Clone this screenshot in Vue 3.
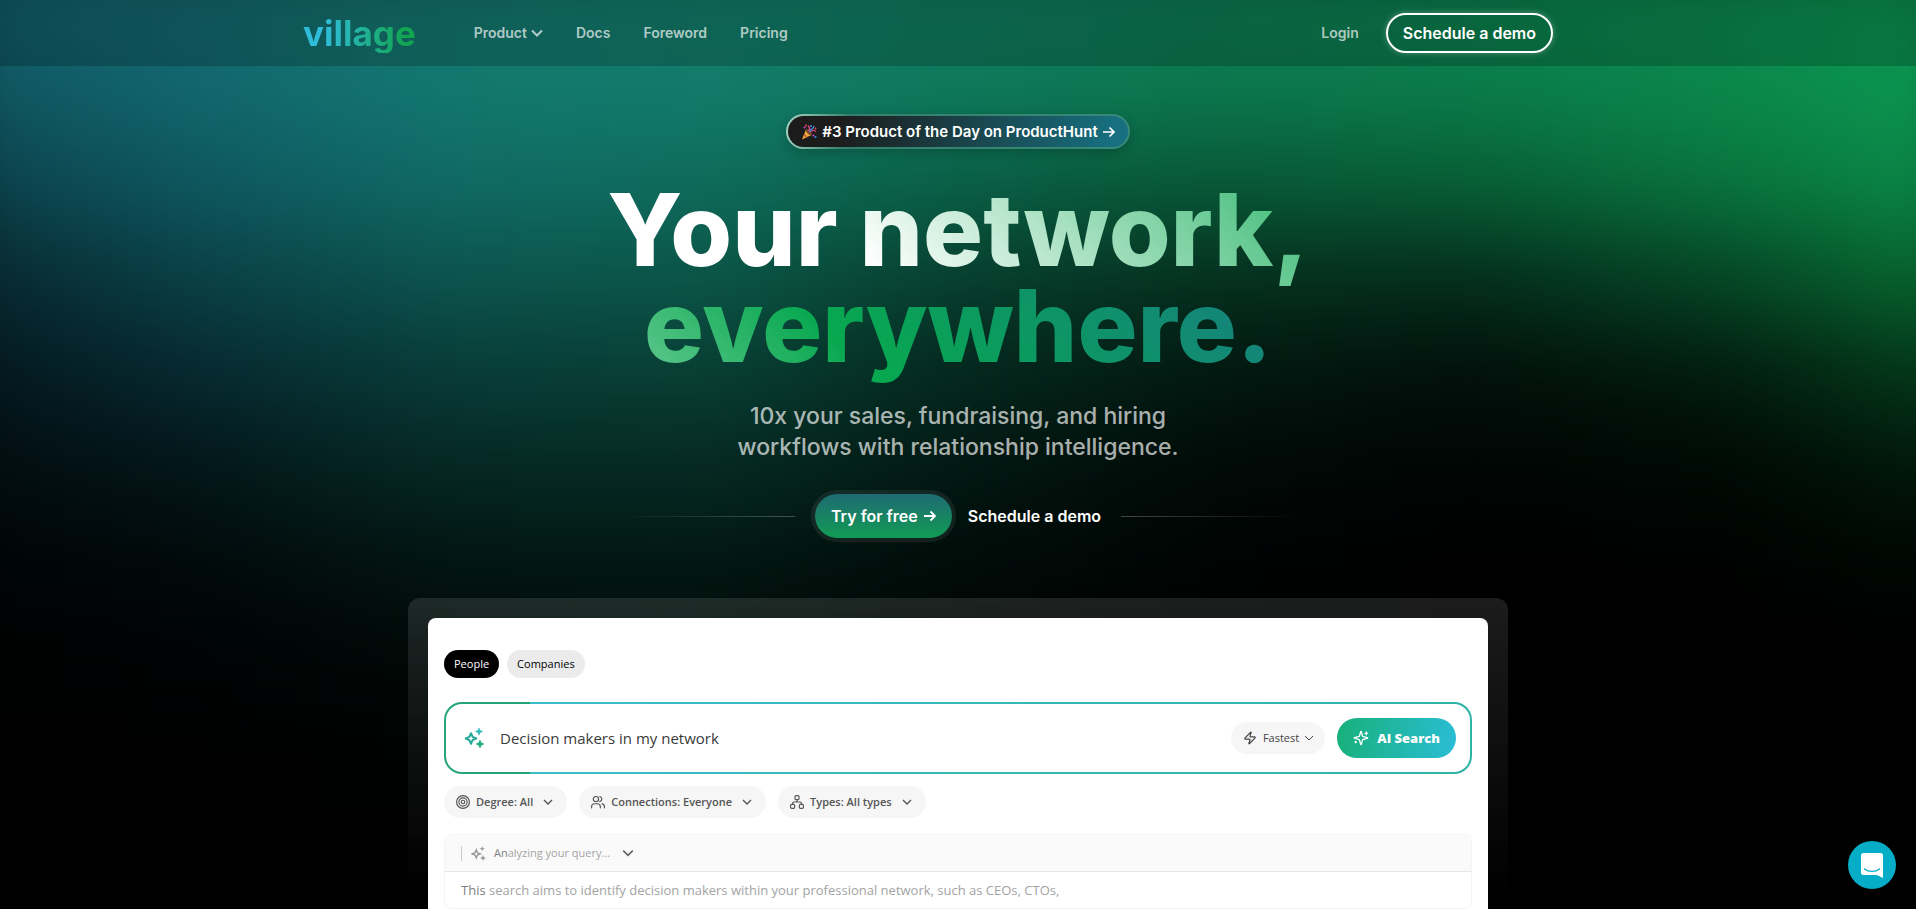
<script setup>
import { ref } from 'vue'

const query = ref('Decision makers in my network')
const tab = ref('People')

const navLinks = ['Docs', 'Foreword', 'Pricing']

// colour rows of the hero glow, top to bottom; every row runs left to right
const glow = [
  ['#11606c', '#146a70', '#147870', '#137e6c', '#107e62', '#0d7e58', '#0c8250', '#0b8b50', '#0b9650'],
  ['#0f5460', '#12666f', '#13786f', '#127c6b', '#0e7a5c', '#0c784e', '#0a7c4b', '#0a884c', '#0b9951'],
  ['#0b3d48', '#0e575f', '#106a66', '#0e6c5b', '#0a6047', '#085938', '#086035', '#09743e', '#0a8c49'],
  ['#07232c', '#0a3f46', '#0c544e', '#0b5648', '#073f2e', '#05301f', '#042d1d', '#054625', '#086d32'],
  ['#03131a', '#06282f', '#083b38', '#083f34', '#04271d', '#021810', '#020f0a', '#021b0e', '#04401d'],
  ['#010a0d', '#031518', '#052723', '#052922', '#021812', '#010906', '#000403', '#000804', '#011b0b'],
  ['#000304', '#010809', '#021411', '#021611', '#010b08', '#000302', '#000000', '#000100', '#000703'],
  ['#000000', '#000203', '#010806', '#010907', '#000302', '#000000', '#000000', '#000000', '#000000'],
  ['#000000', '#000000', '#000201', '#000201', '#000000', '#000000', '#000000', '#000000', '#000000'],
  ['#000000', '#000000', '#000000', '#000000', '#000000', '#000000', '#000000', '#000000', '#000000'],
]
</script>

<template>
  <div class="page">
    <div class="glow" aria-hidden="true">
      <div
        v-for="(row, i) in glow"
        :key="i"
        class="glow_row"
        :style="{ backgroundImage: `linear-gradient(90deg, ${row.join(', ')})` }"
      ></div>
    </div>

    <header class="header">
      <div class="header_inner">
        <a href="#" class="logo">village</a>
        <nav class="nav">
          <button type="button" class="nav_link">
            Product
            <svg width="12" height="12" viewBox="0 0 12 12" fill="none" stroke="currentColor" stroke-width="2"><path d="M1 3.5 6 8.5 11 3.5" /></svg>
          </button>
          <a v-for="link in navLinks" :key="link" href="#" class="nav_link">{{ link }}</a>
        </nav>
        <a href="#" class="nav_link">Login</a>
        <a href="#" class="demo_btn">Schedule a demo</a>
      </div>
    </header>

    <main class="main">
      <a href="#" class="badge">
        <svg width="16" height="16" viewBox="0 0 16 16">
          <path d="M1 15.5 5 5.5 10.5 11z" fill="#f2b233" />
          <path d="M3.5 9.5 7 13 5 13.8 2.6 11.4z" fill="#c8663c" />
          <ellipse cx="7.8" cy="8.2" rx="1.7" ry="3.9" transform="rotate(-45 7.8 8.2)" fill="#7c4a35" />
          <path d="M8 7C9 5 8.5 3 7 1.5M9 8c2-2 4-2 6-.5" stroke="#e0457b" stroke-width="1.3" fill="none" />
          <path d="M8.5 7.5c1-3 4-2 4.5-5.5" stroke="#3f8fe8" stroke-width="1.5" fill="none" />
          <circle cx="3.5" cy="3.5" r="1" fill="#d94ad0" /><circle cx="10" cy="2" r="1" fill="#3f8fe8" />
          <circle cx="14.5" cy="4.5" r="1" fill="#e5484d" /><circle cx="12.5" cy="11.5" r="1" fill="#d94ad0" />
          <circle cx="14.5" cy="13" r="1" fill="#3f8fe8" /><circle cx="5" cy="1.5" r="1" fill="#e5484d" />
        </svg>
        #3 Product of the Day on ProductHunt
        <svg width="12" height="12" viewBox="0 0 12 12" fill="none" stroke="currentColor" stroke-width="1.7"><path d="M0 6H11M6.5 1.5 11 6 6.5 10.5" /></svg>
      </a>

      <h1 class="title"><span>Your network,<br />everywhere.</span></h1>
      <p class="subtitle">10x your sales, fundraising, and hiring<br />workflows with relationship intelligence.</p>

      <div class="cta">
        <span class="cta_line"></span>
        <a href="#" class="try_btn">
          Try for free
          <svg width="12" height="12" viewBox="0 0 12 12" fill="none" stroke="currentColor" stroke-width="1.8"><path d="M0 6H11M6.5 1.5 11 6 6.5 10.5" /></svg>
        </a>
        <a href="#" class="cta_demo">Schedule a demo</a>
        <span class="cta_line cta_line_right"></span>
      </div>

      <div class="frame">
        <div class="app">
          <div class="tabs">
            <button
              v-for="name in ['People', 'Companies']"
              :key="name"
              type="button"
              class="tab"
              :class="{ tab_active: tab === name }"
              @click="tab = name"
            >{{ name }}</button>
          </div>

          <form class="search" @submit.prevent>
            <svg width="20" height="20" viewBox="0 0 20 20">
              <defs>
                <linearGradient id="spark" x1="0" y1="1" x2="0" y2="0">
                  <stop offset="0" stop-color="#19a974" /><stop offset="1" stop-color="#2fbac8" />
                </linearGradient>
              </defs>
              <path d="M7 5.2 8.6 8.9 12.3 10.5 8.6 12.1 7 15.8 5.4 12.1 1.7 10.5 5.4 8.9z" fill="none" stroke="#25a99b" stroke-width="2" stroke-linejoin="round" />
              <path d="M15 0 16 2.5 18.5 3.5 16 4.5 15 7 14 4.5 11.5 3.5 14 2.5zM16 12 17.2 14.8 20 16 17.2 17.2 16 20 14.8 17.2 12 16 14.8 14.8z" fill="url(#spark)" stroke="url(#spark)" stroke-width="0.6" />
            </svg>
            <input v-model="query" class="search_input" type="text" aria-label="Search your network" />
            <button type="button" class="speed">
              <svg width="14" height="14" viewBox="0 0 24 24" fill="none" stroke="currentColor" stroke-width="2" stroke-linejoin="round"><path d="M4 14a1 1 0 0 1-.78-1.63l9.9-10.2a.5.5 0 0 1 .86.46l-1.92 6.02A1 1 0 0 0 13 10h7a1 1 0 0 1 .78 1.63l-9.9 10.2a.5.5 0 0 1-.86-.46l1.92-6.02A1 1 0 0 0 11 14z" /></svg>
              Fastest
              <svg width="8" height="8" viewBox="0 0 8 8" fill="none" stroke="currentColor"><path d="M0 2 4 6 8 2" /></svg>
            </button>
            <button type="submit" class="ai_btn">
              <svg width="16" height="16" viewBox="0 0 24 24" fill="none" stroke="currentColor" stroke-width="2" stroke-linecap="round" stroke-linejoin="round"><path d="M9.937 15.5A2 2 0 0 0 8.5 14.063l-6.135-1.582a.5.5 0 0 1 0-.962L8.5 9.936A2 2 0 0 0 9.937 8.5l1.582-6.135a.5.5 0 0 1 .963 0L14.063 8.5A2 2 0 0 0 15.5 9.937l6.135 1.581a.5.5 0 0 1 0 .964L15.5 14.063a2 2 0 0 0-1.437 1.437l-1.582 6.135a.5.5 0 0 1-.963 0zM20 3v4M22 5h-4M4 17v2M5 18H3" /></svg>
              AI Search
            </button>
          </form>

          <div class="filters">
            <button type="button" class="filter">
              <svg width="14" height="14" viewBox="0 0 24 24" fill="none" stroke="currentColor" stroke-width="2"><circle cx="12" cy="12" r="11" /><circle cx="12" cy="12" r="7" /><circle cx="12" cy="12" r="3" /></svg>
              Degree: All
              <svg class="chev" width="10" height="10" viewBox="0 0 10 10" fill="none" stroke="currentColor" stroke-width="1.4"><path d="M1 3 5 7 9 3" /></svg>
            </button>
            <button type="button" class="filter">
              <svg width="14" height="14" viewBox="0 0 24 24" fill="none" stroke="currentColor" stroke-width="2" stroke-linecap="round"><path d="M16 22v-2a5 5 0 0 0-5-5H6a5 5 0 0 0-5 5v2" /><circle cx="8.5" cy="7" r="4.5" /><path d="M23 22v-2a5 5 0 0 0-4-4.8M15 2.6a4.5 4.5 0 0 1 0 8.8" /></svg>
              Connections: Everyone
              <svg class="chev" width="10" height="10" viewBox="0 0 10 10" fill="none" stroke="currentColor" stroke-width="1.4"><path d="M1 3 5 7 9 3" /></svg>
            </button>
            <button type="button" class="filter">
              <svg width="14" height="14" viewBox="0 0 24 24" fill="none" stroke="currentColor" stroke-width="2"><rect x="16" y="16" width="7" height="7" rx="2" /><rect x="1" y="16" width="7" height="7" rx="2" /><rect x="8.5" y="1" width="7" height="7" rx="2" /><path d="M4.5 16v-2a2 2 0 0 1 2-2h11a2 2 0 0 1 2 2v2M12 12V8" /></svg>
              Types: All types
              <svg class="chev" width="10" height="10" viewBox="0 0 10 10" fill="none" stroke="currentColor" stroke-width="1.4"><path d="M1 3 5 7 9 3" /></svg>
            </button>
          </div>

          <section class="result">
            <button type="button" class="result_head">
              <span class="result_icon">
                <svg width="15" height="15" viewBox="0 0 20 20">
                  <path d="M7 5.2 8.6 8.9 12.3 10.5 8.6 12.1 7 15.8 5.4 12.1 1.7 10.5 5.4 8.9z" fill="none" stroke="#9a9a9a" stroke-width="2" />
                  <path d="M15 0 16 2.5 18.5 3.5 16 4.5 15 7 14 4.5 11.5 3.5 14 2.5zM16 12 17.2 14.8 20 16 17.2 17.2 16 20 14.8 17.2 12 16 14.8 14.8z" fill="#9a9a9a" />
                </svg>
              </span>
              <span><b>An</b>alyzing your query...</span>
              <svg class="chev" width="12" height="12" viewBox="0 0 10 10" fill="none" stroke="#666" stroke-width="1.4"><path d="M1 3 5 7 9 3" /></svg>
            </button>
            <p class="result_text"><b>This</b> search aims to identify decision makers within your professional network, such as CEOs, CTOs,</p>
          </section>
        </div>
      </div>
    </main>

    <button type="button" class="chat" aria-label="Open chat">
      <svg width="22" height="25" viewBox="0 0 22 25"><path d="M2.5 0H19.5A2.5 2.5 0 0 1 22 2.5V25l-6-3H2.5A2.5 2.5 0 0 1 0 19.5V2.5A2.5 2.5 0 0 1 2.5 0z" fill="#fff" /><path d="M3.5 16c4 3.2 11 3.2 15 0" fill="none" stroke="#06adc6" stroke-width="1.3" stroke-linecap="round" /></svg>
    </button>
  </div>
</template>

<style>
  body {
    background-color: black;
    overflow: hidden;
  }
</style>

<style scoped>
  .page {
    position: relative;
    height: 100vh;
    overflow: hidden;
    font-family: Inter, "Liberation Sans", sans-serif;
    color: white;
  }
  .page * {
    box-sizing: border-box;
  }
  a {
    color: inherit;
    text-decoration: none;
  }
  button {
    border: none;
    background: none;
    color: inherit;
    font: inherit;
    padding: 0;
    cursor: pointer;
  }
  svg {
    flex: none;
  }

  .glow {
    position: absolute;
    inset: -64px -64px 0;
    display: flex;
    flex-direction: column;
    filter: blur(40px);
  }
  .glow_row {
    flex: 1;
  }

  .header {
    position: relative;
    background-color: rgba(0, 0, 0, 0.2);
  }
  .header_inner {
    display: flex;
    align-items: center;
    width: 100%;
    max-width: 1310px;
    height: 66px;
    margin: 0 auto;
    padding-right: 60px;
  }
  .logo {
    font-size: 35px;
    font-weight: 700;
    line-height: 40px;
    color: transparent;
    background-image: linear-gradient(90deg, #2fbcd8 20%, #12a551 90%);
    background-clip: text;
  }
  .nav {
    display: flex;
    flex: 1;
    gap: 33px;
    margin-left: 58px;
  }
  .nav_link {
    display: flex;
    align-items: center;
    gap: 4px;
    font-size: 14px;
    font-weight: 600;
    line-height: 20px;
    color: rgba(255, 255, 255, 0.68);
  }
  .demo_btn {
    margin-left: 27px;
    padding: 8px 15px;
    border: 2px solid white;
    border-radius: 20px;
    box-shadow: 0 0 6px rgba(255, 255, 255, 0.3);
    font-size: 16px;
    font-weight: 600;
    line-height: 20px;
  }

  .main {
    position: relative;
    display: flex;
    flex-direction: column;
    align-items: center;
    padding-top: 48px;
  }
  .badge {
    display: flex;
    align-items: center;
    gap: 5px;
    padding: 5px 13px;
    border: 2px solid transparent;
    border-radius: 18px;
    background:
      linear-gradient(100deg, #1c1c1c 15%, #176f7f 95%) padding-box,
      linear-gradient(100deg, #a8d5c5, #35806c 18%, #358a78) border-box;
    box-shadow: 0 4px 12px rgba(0, 0, 0, 0.2);
    font-size: 15px;
    font-weight: 600;
    line-height: 21px;
  }
  .title {
    margin: 33px 0 0;
    font-size: 100px;
    font-weight: 800;
    line-height: 96px;
    text-align: center;
  }
  .title span {
    color: transparent;
    background-image: linear-gradient(45deg, white 20%, #07a84f 65%, #167e82);
    background-clip: text;
  }
  .subtitle {
    margin: 27px 0 0;
    font-size: 23px;
    font-weight: 500;
    line-height: 31px;
    text-align: center;
    color: rgba(255, 255, 255, 0.68);
  }
  .cta {
    display: flex;
    align-items: center;
    gap: 16px;
    margin-top: 31px;
    font-size: 16px;
    font-weight: 600;
    line-height: 20px;
  }
  .cta_line {
    width: 180px;
    height: 1px;
    margin-right: 4px;
    background-image: linear-gradient(90deg, transparent, rgba(255, 255, 255, 0.25));
  }
  .cta_line_right {
    margin: 0 0 0 4px;
    background-image: linear-gradient(270deg, transparent, rgba(255, 255, 255, 0.25));
  }
  .try_btn {
    display: flex;
    align-items: center;
    gap: 6px;
    padding: 12px 16px;
    border-radius: 22px;
    background-image: linear-gradient(180deg, #1f6b72, #129b55);
    box-shadow: 0 0 0 4px rgba(255, 255, 255, 0.07);
  }

  .frame {
    width: 1100px;
    max-width: 100%;
    margin-top: 60px;
    padding: 20px 20px 0;
    border-radius: 12px 12px 0 0;
    background-image: linear-gradient(180deg, rgba(255, 255, 255, 0.11), transparent 300px);
  }
  .app {
    height: 400px;
    padding: 32px 16px;
    border-radius: 8px 8px 0 0;
    background-color: white;
    font-family: "Open Sans", "Noto Sans", sans-serif;
    color: black;
  }
  .tabs {
    display: flex;
    gap: 8px;
  }
  .tab {
    padding: 5px 10px;
    border-radius: 14px;
    background-color: #ebebeb;
    font-size: 11px;
    line-height: 18px;
  }
  .tab_active {
    background-color: black;
    color: white;
  }
  .search {
    display: flex;
    align-items: center;
    height: 72px;
    margin-top: 24px;
    padding: 0 14px 0 18px;
    border: 2px solid transparent;
    border-radius: 18px;
    background:
      linear-gradient(white, white) padding-box,
      linear-gradient(90deg, #27a577 86px, #3cbcc9 86px, #2fb3a6) border-box;
  }
  .search_input {
    flex: 1;
    min-width: 0;
    margin-left: 16px;
    padding: 0;
    border: none;
    outline: none;
    background: none;
    font-family: inherit;
    font-size: 15px;
    line-height: 24px;
    color: #3a3a3a;
  }
  .speed {
    display: flex;
    align-items: center;
    gap: 6px;
    margin-right: 12px;
    padding: 7px 12px;
    border-radius: 16px;
    background-color: #f6f6f6;
    font-size: 11px;
    line-height: 18px;
    color: #444;
  }
  .ai_btn {
    display: flex;
    align-items: center;
    gap: 8px;
    padding: 10px 16px;
    border-radius: 20px;
    background-image: linear-gradient(100deg, #17b078, #2bbdd6);
    font-size: 13px;
    font-weight: 800;
    line-height: 20px;
    color: white;
  }
  .filters {
    display: flex;
    gap: 12px;
    margin-top: 12px;
  }
  .filter {
    display: flex;
    align-items: center;
    gap: 6px;
    padding: 7px 14px 7px 12px;
    border-radius: 16px;
    background-color: #f6f6f6;
    font-size: 11px;
    font-weight: 600;
    line-height: 18px;
    color: #555;
  }
  .chev {
    margin-left: 4px;
  }
  .result {
    margin-top: 16px;
    border: 1px solid #f3f3f3;
    border-radius: 8px;
  }
  .result_head {
    display: flex;
    align-items: center;
    gap: 8px;
    width: 100%;
    height: 37px;
    padding-left: 16px;
    border-bottom: 1px solid #e5e5e5;
    background-color: #fafafa;
    font-size: 11px;
    line-height: 16px;
    color: #a3a3a3;
  }
  .result_icon {
    display: flex;
    padding-left: 9px;
    border-left: 1px solid #ccc;
  }
  .result_text {
    margin: 0;
    padding: 8px 16px;
    font-size: 13px;
    line-height: 20px;
    color: #a3a3a3;
  }
  .result b {
    font-weight: 400;
    color: #808080;
  }
  .chat {
    position: fixed;
    right: 20px;
    bottom: 20px;
    display: flex;
    align-items: center;
    justify-content: center;
    width: 48px;
    height: 48px;
    border-radius: 50%;
    background-color: #06adc6;
  }
</style>
